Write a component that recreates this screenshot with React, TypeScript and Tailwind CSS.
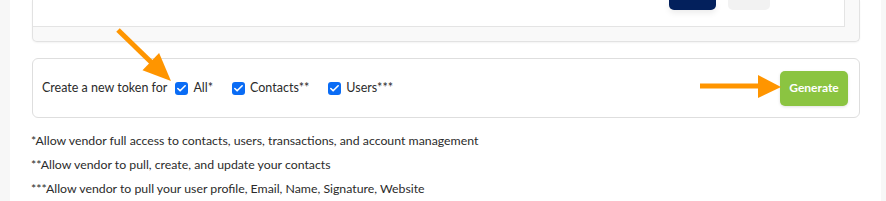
import { Check } from "lucide-react";

const scopes = [
  { label: "All*" },
  { label: "Contacts**" },
  { label: "Users***" },
];

const notes = [
  "*Allow vendor full access to contacts, users, transactions, and account management",
  "**Allow vendor to pull, create, and update your contacts",
  "***Allow vendor to pull your user profile, Email, Name, Signature, Website",
];

function Checkbox() {
  return (
    <span className="flex h-[13px] w-[13px] items-center justify-center rounded-[3px] bg-[#0a6cf5]">
      <Check size={11} strokeWidth={3.5} className="text-white" />
    </span>
  );
}

export default function App() {
  return (
    <div
      className="relative flex h-[201px] overflow-hidden bg-[#f7f7f7] text-[#2b2b2b]"
      style={{ fontFamily: "Lato, 'Open Sans', sans-serif" }}
    >
      <div className="ml-[10px] flex w-[871px] flex-col bg-white pl-[22px] pr-[21px]">
        {/* Previous card (cut off at the top) */}
        <div className="flex h-[42px] flex-col rounded-b-[5px] border-x border-b border-[#e2e2e2] bg-[#f9f9f9] shadow-[0_1px_2px_rgba(0,0,0,0.05)]">
          <div className="mr-[14px] flex h-[27px] justify-end gap-[12px] border-r border-b border-[#e4e4e4] bg-white pr-[74px]">
            <div className="h-[10px] w-[47px] rounded-b-[5px] bg-[#03205c] shadow-[0_3px_6px_rgba(0,0,0,0.08)]" />
            <div className="h-[10px] w-[42px] rounded-b-[5px] bg-[#f2f2f2]" />
          </div>
        </div>

        {/* Token card */}
        <div className="mt-[16px] flex h-[60px] items-center justify-between rounded-[6px] border border-[#dedede] pl-[9px] pr-[11px]">
          <div className="flex items-center text-[12.5px]">
            <span className="mr-[8px]">Create a new token for</span>
            {scopes.map((s) => (
              <label key={s.label} className="mr-[19px] flex items-center gap-[5px]">
                <Checkbox />
                <span>{s.label}</span>
              </label>
            ))}
          </div>
          <button className="h-[35px] w-[68px] rounded-[5px] bg-[#8bc441] text-[12px] font-bold text-white shadow-[0_1px_3px_rgba(0,0,0,0.12)]">
            Generate
          </button>
        </div>

        {/* Footnotes */}
        <div className="mt-[11px] flex flex-col text-[12.3px] leading-[24px]">
          {notes.map((n) => (
            <p key={n} className="-ml-[1px]">
              {n}
            </p>
          ))}
        </div>
      </div>

      {/* Annotation arrows */}
      <svg className="pointer-events-none absolute inset-0" width="886" height="201">
        <line x1="118" y1="30" x2="152" y2="63" stroke="#ff9500" strokeWidth="5" />
        <polygon points="142.5,70.3 159.1,53.1 171,81" fill="#ff9500" />
        <line x1="700" y1="86" x2="760" y2="86" stroke="#ff9500" strokeWidth="5" />
        <polygon points="758,75 758,98 781,87" fill="#ff9500" />
      </svg>
    </div>
  );
}
